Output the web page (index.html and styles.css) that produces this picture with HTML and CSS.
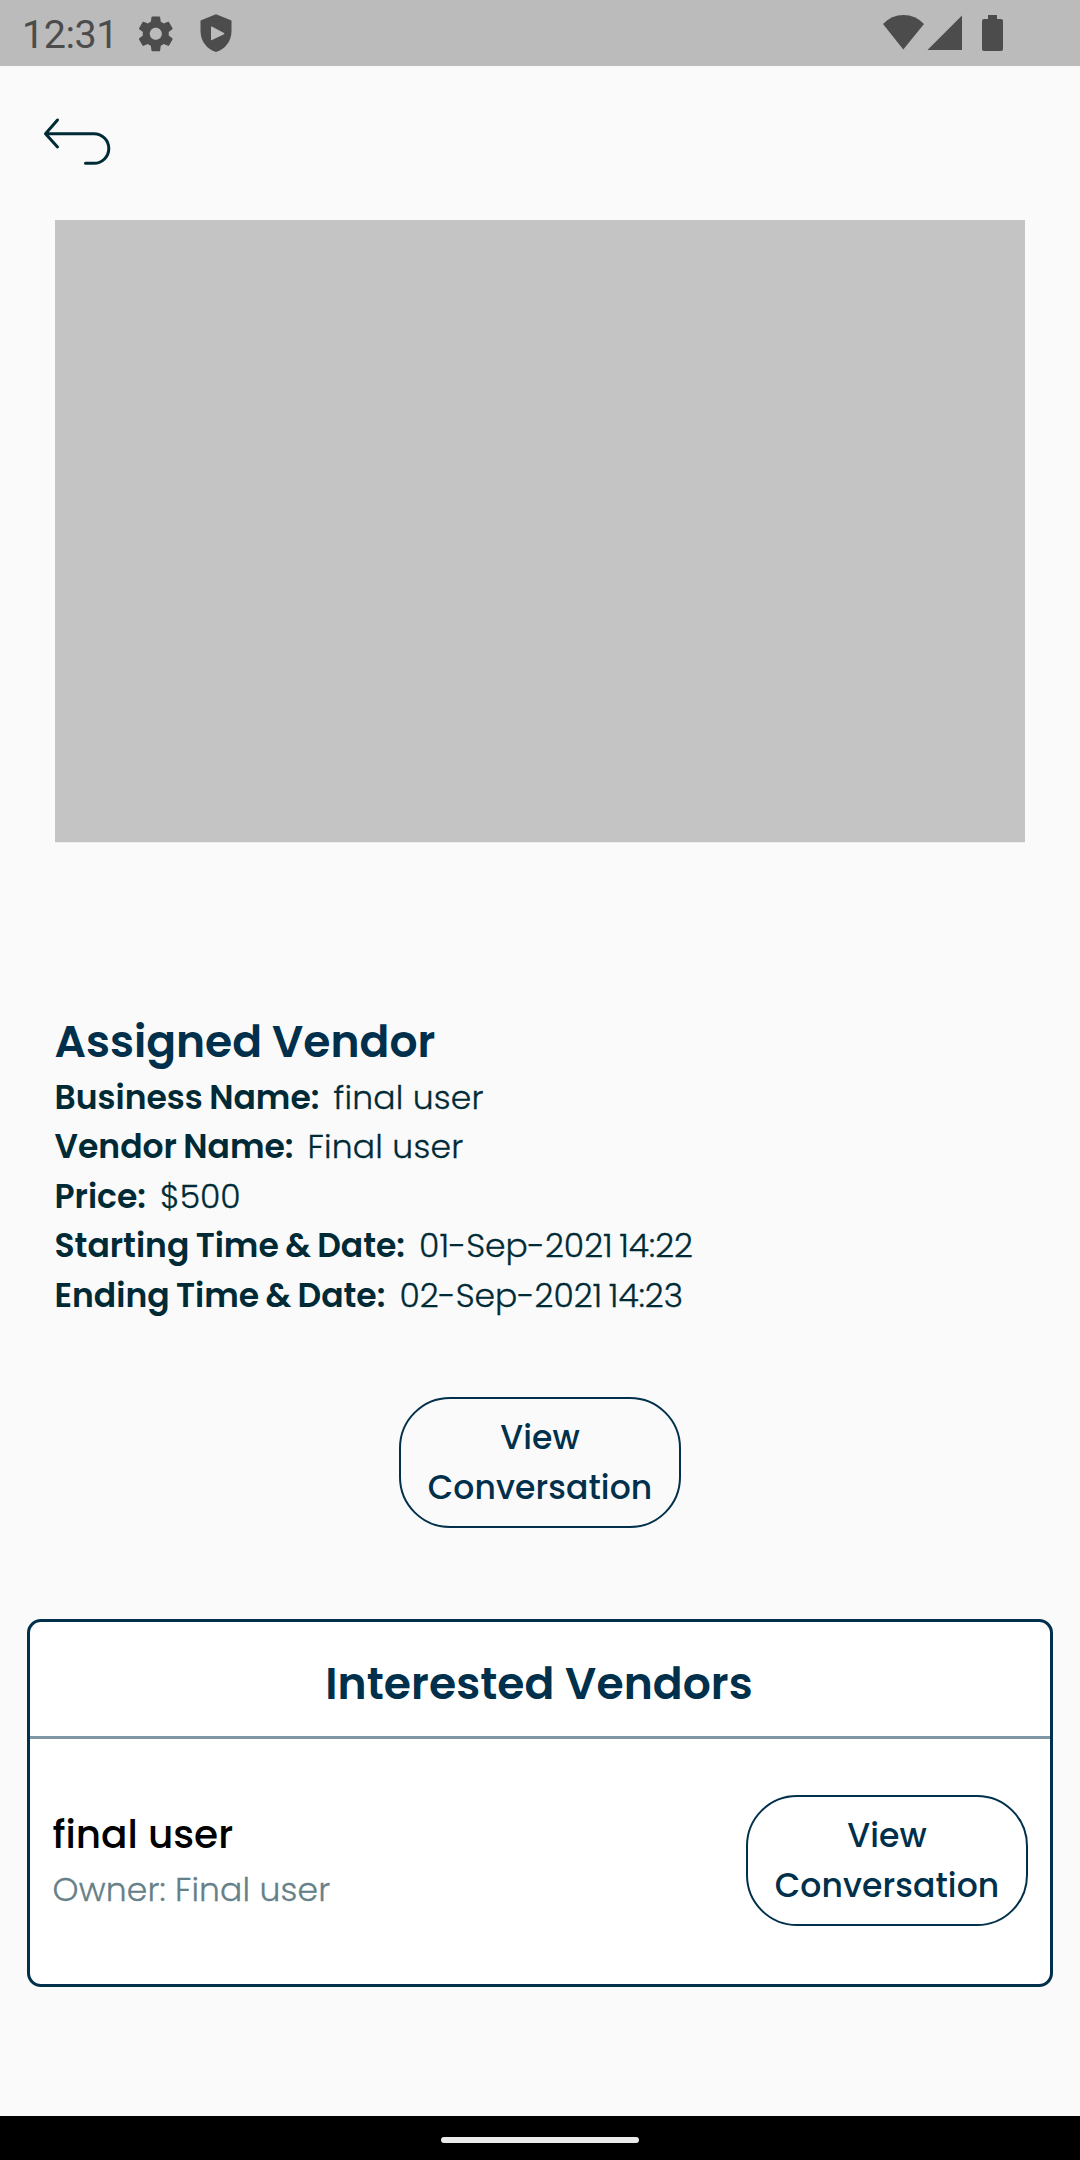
FILE: index.html
```
<!DOCTYPE html>
<html lang="en">
<head>
<meta charset="utf-8">
<title>Assigned Vendor</title>
<link rel="stylesheet" href="styles.css">
</head>
<body>
<div class="screen">
  <header class="status-bar">
    <div class="status-left">
      <span class="clock">12:31</span>
      <svg class="icon-gear" viewBox="0 0 24 24"><path fill-rule="evenodd" d="M19.43 12.98c.04-.32.07-.64.07-.98s-.03-.66-.07-.98l2.11-1.65c.19-.15.24-.42.12-.64l-2-3.46c-.12-.22-.39-.3-.61-.22l-2.49 1c-.52-.4-1.08-.73-1.69-.98l-.38-2.65C14.46 2.18 14.25 2 14 2h-4c-.25 0-.46.18-.49.42l-.38 2.65c-.61.25-1.17.59-1.69.98l-2.49-1c-.23-.09-.49 0-.61.22l-2 3.46c-.13.22-.07.49.12.64l2.11 1.65c-.04.32-.07.65-.07.98s.03.66.07.98l-2.11 1.65c-.19.15-.24.42-.12.64l2 3.46c.12.22.39.3.61.22l2.49-1c.52.4 1.08.73 1.69.98l.38 2.65c.03.24.24.42.49.42h4c.25 0 .46-.18.49-.42l.38-2.65c.61-.25 1.17-.59 1.69-.98l2.49 1c.23.09.49 0 .61-.22l2-3.46c.12-.22.07-.49-.12-.64l-2.11-1.65zM12 15.5c-1.93 0-3.5-1.57-3.5-3.5s1.57-3.5 3.5-3.5 3.5 1.57 3.5 3.5-1.57 3.5-3.5 3.5z"/></svg>
      <svg class="icon-shield" viewBox="0 0 32 38"><path fill-rule="evenodd" d="M16 .3 31.5 6.500V17C31.500 27 25 35.500 16 38C7 35.500.5 27 .5 17V6.500ZM11 13.500V25.500Q11 26.500 12 26L24 20.300Q25 19.700 24 19L12.300 12.700Q11 12.300 11 13.500Z"/></svg>
    </div>
    <svg class="status-right" viewBox="0 0 122 38">
      <path d="M21.300 35.500 1 10Q9.500 1 21.500 1T42 10Z"/>
      <path d="M45.500 36 80 1.500V36Z"/>
      <path d="M106 1H115V5H119Q121 5 121 7V35Q121 37 119 37H102Q100 37 100 35V7Q100 5 102 5H106Z"/>
    </svg>
  </header>

  <nav class="top-nav">
    <svg class="icon-back" viewBox="0 0 68 48"><path d="M15.500 4 3.500 17.700 15.500 31M3.500 17.700H52A14.800 14.800 0 0 1 52 47.300H43.500"/></svg>
  </nav>

  <main class="content">
    <div class="photo"></div>

    <section class="assigned">
      <h1 class="title">Assigned Vendor</h1>
      <dl class="details">
        <div class="row"><dt class="label">Business Name:</dt><dd class="value name">final user</dd></div>
        <div class="row"><dt class="label">Vendor Name:</dt><dd class="value name">Final user</dd></div>
        <div class="row"><dt class="label">Price:</dt><dd class="value">$500</dd></div>
        <div class="row"><dt class="label">Starting Time &amp; Date:</dt><dd class="value date">01-Sep-2021 14:22</dd></div>
        <div class="row"><dt class="label">Ending Time &amp; Date:</dt><dd class="value date">02-Sep-2021 14:23</dd></div>
      </dl>
      <button class="btn" type="button"><span>View</span><span>Conversation</span></button>
    </section>

    <section class="card">
      <h2 class="card-title">Interested Vendors</h2>
      <div class="vendor">
        <div class="vendor-text">
          <div class="vendor-name">final user</div>
          <div class="vendor-owner">Owner: Final user</div>
        </div>
        <button class="btn" type="button"><span>View</span><span>Conversation</span></button>
      </div>
    </section>
  </main>

  <footer class="gesture-bar"><div class="pill"></div></footer>
</div>
</body>
</html>
```
FILE: styles.css
```
* { box-sizing: border-box; }

body {
  margin: 0;
  background: #fafafa;
  font-family: Poppins, Inter, "Open Sans", sans-serif;
}

.screen {
  display: flex;
  flex-direction: column;
  width: 1080px;
  height: 2160px;
  overflow: hidden;
}

.status-bar {
  display: flex;
  justify-content: space-between;
  align-items: flex-start;
  height: 66px;
  padding: 0 76px 0 22px;
  background: #bbbbbb;
  fill: #4c4c4c;
}

.status-left { display: flex; align-items: flex-start; }

.clock {
  width: 112.5px;
  margin-top: 11px;
  font: 400 39.5px/48px Roboto, sans-serif;
  letter-spacing: -0.5px;
  color: #4c4c4c;
}

.icon-gear { width: 41.6px; height: 41.6px; margin-top: 12.6px; }
.icon-shield { width: 32px; height: 38px; margin: 14px 0 0 24.4px; }
.status-right { width: 122px; height: 38px; margin-top: 14px; }

.top-nav { height: 154px; padding: 50px 0 0 42px; }

.icon-back {
  display: block;
  width: 68px;
  height: 48px;
  overflow: visible;
  fill: none;
  stroke: #002b36;
  stroke-width: 3;
  stroke-linecap: round;
  stroke-linejoin: round;
}

.content { flex: 1; }

.photo {
  height: 623px;
  margin: 0 55px;
  background: #c4c4c4;
  border-bottom: 1px solid #eeeeee;
}

.assigned {
  display: flex;
  flex-direction: column;
  margin: 168px 54.5px 0;
}

.title, .card-title {
  margin: 0;
  font-size: 44px;
  font-weight: 600;
  color: #00304b;
}

.title { margin-bottom: 0.8px; line-height: 61px; word-spacing: -0.5px; }

.details { margin: 0; }

.row {
  display: flex;
  gap: 14px;
  font-size: 33px;
  line-height: 49.5px;
  color: #002b36;
}

.label { font-weight: 600; word-spacing: -1.5px; }

.value {
  margin: 0;
  font-weight: 300;
  -webkit-text-stroke: 0.3px;
}

.value.name { letter-spacing: 0.2px; }
.value.date { word-spacing: -2.5px; }

.btn {
  display: flex;
  flex-direction: column;
  align-items: center;
  width: 282px;
  height: 131px;
  padding: 14px 0 0;
  border: 2px solid #00304b;
  border-radius: 51px;
  background: transparent;
  font: inherit;
  font-size: 33px;
  font-weight: 500;
  line-height: 50px;
  letter-spacing: 0.1px;
  color: #00304b;
}

.assigned .btn { align-self: center; margin-top: 76.7px; }

.card {
  width: 1026px;
  height: 368px;
  margin: 91px 0 0 27px;
  border: 3px solid #00304b;
  border-radius: 14px;
  background: #ffffff;
}

.card-title {
  height: 117px;
  padding: 29px 2px 0 0;
  border-bottom: 3px solid #8097a5;
  line-height: 65px;
  letter-spacing: 0.08px;
  text-align: center;
}

.vendor {
  display: flex;
  justify-content: space-between;
  padding: 56px 22px 0 22.5px;
}

.vendor-text { padding-top: 10px; }

.vendor-name {
  margin-bottom: 0.6px;
  font-size: 39px;
  font-weight: 500;
  line-height: 59px;
  color: #000000;
}

.vendor-owner {
  font-size: 33px;
  font-weight: 300;
  line-height: 50px;
  letter-spacing: 0.15px;
  -webkit-text-stroke: 0.3px;
  color: #668088;
}

.gesture-bar {
  display: flex;
  justify-content: center;
  height: 44px;
  padding-top: 21px;
  background: #000000;
}

.pill { width: 198px; height: 6px; border-radius: 3px; background: #ebebeb; }
```
